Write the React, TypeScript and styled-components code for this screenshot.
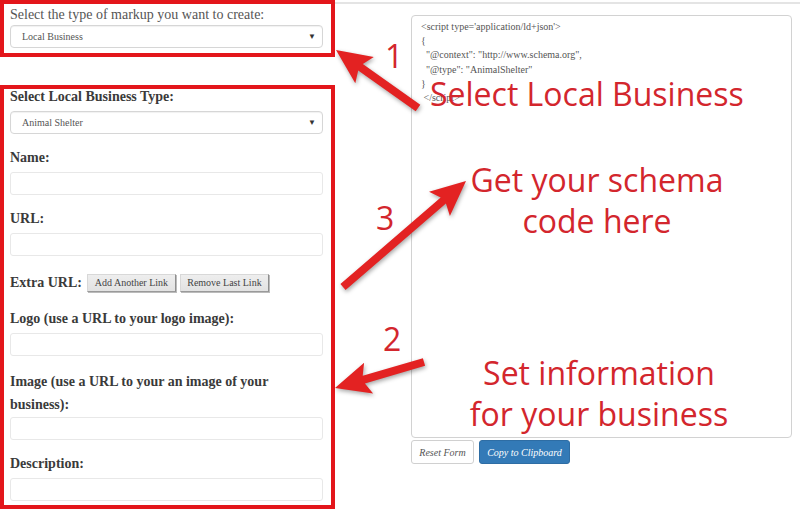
import styled, { createGlobalStyle } from "styled-components";

const Global = createGlobalStyle`
  html, body { margin: 0; padding: 0; background: #fff; }
  body { font-family: "Liberation Serif", "Times New Roman", serif; color: #333; }
`;

const RED = "#e3161b";
const INK = "#d3262d";

type Pt = [number, number];

function arrowPoints(tail: Pt, tip: Pt, w = 8, hl = 30, hw = 32) {
  const [x1, y1] = tail;
  const [x2, y2] = tip;
  const L = Math.hypot(x2 - x1, y2 - y1);
  const ux = (x2 - x1) / L, uy = (y2 - y1) / L;
  const px = -uy, py = ux;
  const nx = x2 - ux * hl, ny = y2 - uy * hl;
  const bx = x2 - ux * (hl + 5), by = y2 - uy * (hl + 5);
  const pts: Pt[] = [
    [x1 + px * w / 2, y1 + py * w / 2],
    [nx + px * w / 2, ny + py * w / 2],
    [bx + px * hw / 2, by + py * hw / 2],
    [x2, y2],
    [bx - px * hw / 2, by - py * hw / 2],
    [nx - px * w / 2, ny - py * w / 2],
    [x1 - px * w / 2, y1 - py * w / 2],
  ];
  return pts.map(p => `${p[0].toFixed(1)},${p[1].toFixed(1)}`).join(" ");
}

const arrows: { tail: Pt; tip: Pt }[] = [
  { tail: [418, 108], tip: [336, 50] },
  { tail: [343, 287], tip: [466, 181] },
  { tail: [424, 362], tip: [335, 388] },
];

export default function App() {
  return (
    <>
      <Global />
      <Page>
        <FormCol>
          <RedBox>
            <TopLabel>Select the type of markup you want to create:</TopLabel>
            <Select>Local Business<Caret>▼</Caret></Select>
          </RedBox>

          <RedBox $gap={28} $bottom={4}>
            <Fields>
              <Group>
                <Label>Select Local Business Type:</Label>
                <Select>Animal Shelter<Caret>▼</Caret></Select>
              </Group>
              <Group>
                <Label>Name:</Label>
                <Input />
              </Group>
              <Group>
                <Label>URL:</Label>
                <Input />
              </Group>
              <ExtraRow>
                <Label as="span">Extra URL:</Label>
                <OldButton>Add Another Link</OldButton>
                <OldButton>Remove Last Link</OldButton>
              </ExtraRow>
              <Group>
                <Label>Logo (use a URL to your logo image):</Label>
                <Input />
              </Group>
              <Group>
                <Label $tall>Image (use a URL to your an image of your business):</Label>
                <Input />
              </Group>
              <Group $last>
                <Label>Description:</Label>
                <Input />
              </Group>
            </Fields>
          </RedBox>
        </FormCol>

        <CodeCol>
          <CodeBox>{`<script type='application/ld+json'>
{
  "@context": "http://www.schema.org",
  "@type": "AnimalShelter"
}
 </script>`}</CodeBox>
          <Actions>
            <ResetButton>Reset Form</ResetButton>
            <CopyButton>Copy to Clipboard</CopyButton>
          </Actions>
        </CodeCol>

        <Overlay>
          <ArrowSvg width="800" height="510" viewBox="0 0 800 510">
            {arrows.map((a, i) => (
              <polygon key={i} points={arrowPoints(a.tail, a.tip)} fill="#e32222" strokeLinejoin="round" />
            ))}
          </ArrowSvg>
          <Step style={{ left: 385, top: 40 }}>1</Step>
          <Step style={{ left: 376, top: 202 }}>3</Step>
          <Step style={{ left: 383, top: 323 }}>2</Step>
          <Note style={{ left: 430, top: 78 }}>Select Local Business</Note>
          <NoteBlock style={{ left: 447, top: 159 }}>Get your schema<br />code here</NoteBlock>
          <NoteBlock style={{ left: 449, top: 352 }}>Set information<br />for your business</NoteBlock>
        </Overlay>
      </Page>
    </>
  );
}

const Page = styled.div`
  position: relative;
  width: 800px;
  height: 510px;
  overflow: hidden;
  display: flex;
  align-items: flex-start;
`;

const FormCol = styled.div`
  width: 335px;
  flex: none;
`;

const RedBox = styled.div<{ $gap?: number; $bottom?: number }>`
  margin-top: ${p => p.$gap ?? 0}px;
  border: 4px solid ${RED};
  padding: 1px 8px ${p => p.$bottom ?? 5}px 6px;
`;

const TopLabel = styled.div`
  font-size: 14px;
  line-height: 20px;
  color: #555;
`;

const Select = styled.div`
  position: relative;
  height: 23px;
  box-sizing: border-box;
  border: 1px solid #d6d6d6;
  border-radius: 4px;
  box-shadow: inset 0 1px 1px rgba(0, 0, 0, 0.06);
  padding-left: 11px;
  font-size: 10px;
  line-height: 21px;
  color: #555;
  background: #fff;
`;

const Caret = styled.span`
  position: absolute;
  right: 6px;
  top: 0;
  font-size: 8px;
  line-height: 21px;
  color: #333;
`;

const Fields = styled.div`
  margin-top: -3px;
`;

const Group = styled.div<{ $last?: boolean }>`
  margin-bottom: ${p => (p.$last ? 0 : 14)}px;
`;

const Label = styled.div<{ $tall?: boolean }>`
  font-size: 14px;
  font-weight: bold;
  color: #3a3a3a;
  line-height: ${p => (p.$tall ? 23 : 20)}px;
  margin-bottom: ${p => (p.$tall ? 1 : 4)}px;
`;

const Input = styled.div`
  height: 23px;
  box-sizing: border-box;
  border: 1px solid #e8e8e8;
  border-radius: 3px;
  background: #fff;
`;

const ExtraRow = styled.div`
  display: flex;
  align-items: center;
  gap: 4px;
  height: 25px;
  margin-bottom: 14px;
  ${Label} { margin: 0 1px 0 0; }
`;

const OldButton = styled.button`
  height: 18px;
  width: 89px;
  padding: 0;
  font-family: "Liberation Serif", serif;
  font-size: 10px;
  color: #444;
  background: linear-gradient(#eeeeee, #e2e2e2);
  border: 1px solid;
  border-color: #d8d8d8 #8f8f8f #9a9a9a #d8d8d8;
  box-shadow: 1px 1px 0 #bbb;
`;

const CodeCol = styled.div`
  flex: 1;
  margin-top: 2px;
  border-top: 2px solid #e4e4e4;
  padding: 11px 8px 0 76px;
`;

const CodeBox = styled.pre`
  margin: 0;
  height: 423px;
  box-sizing: border-box;
  border: 1px solid #d2d2d2;
  border-radius: 4px;
  padding: 4px 9px;
  font-family: "Liberation Serif", serif;
  font-size: 10px;
  line-height: 14.2px;
  color: #555;
  white-space: pre;
`;

const Actions = styled.div`
  display: flex;
  gap: 5px;
  margin-top: 2px;
`;

const ResetButton = styled.button`
  width: 63px;
  height: 24px;
  padding: 0;
  border: 1px solid #d0d0d0;
  border-radius: 3px;
  background: #fff;
  font-family: "Liberation Serif", serif;
  font-style: italic;
  font-size: 10px;
  color: #555;
`;

const CopyButton = styled(ResetButton)`
  width: 91px;
  border-color: #2e6da4;
  background: #337ab7;
  color: #fff;
`;

const Overlay = styled.div`
  position: absolute;
  inset: 0;
  pointer-events: none;
`;

const ArrowSvg = styled.svg`
  position: absolute;
  left: 0;
  top: 0;
  filter: drop-shadow(1px 2px 2px rgba(0, 0, 0, 0.35));
`;

const Note = styled.div`
  position: absolute;
  font-family: "Open Sans", "Noto Sans", sans-serif;
  font-size: 32px;
  line-height: 32px;
  color: ${INK};
  white-space: nowrap;
`;

const NoteBlock = styled(Note)`
  width: 300px;
  text-align: center;
  line-height: 41px;
`;

const Step = styled(Note)``;
